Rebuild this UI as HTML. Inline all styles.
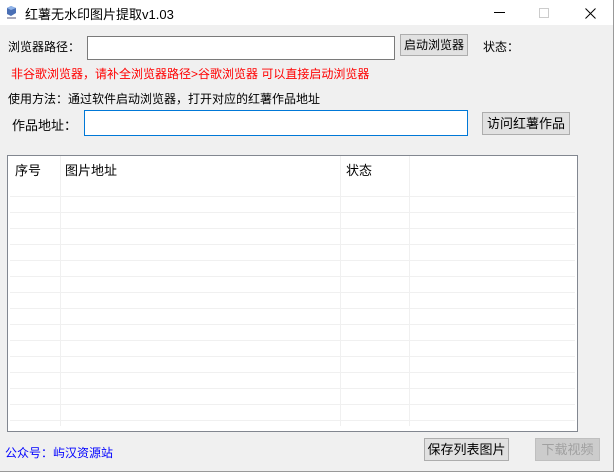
<!DOCTYPE html>
<html><head><meta charset="utf-8"><style>
*{margin:0;padding:0;box-sizing:border-box}
body{width:614px;height:472px;overflow:hidden;background:#f0f0f0;font-family:"Liberation Sans","Noto Sans CJK SC",sans-serif;font-size:12px;color:#000;position:relative}
.a{position:absolute;white-space:nowrap}
.tb{position:absolute;left:0;top:0;width:614px;height:25px;background:#fff}
.btn{position:absolute;background:#e1e1e1;border:1px solid #adadad;text-align:center;font-size:12px}
.inp{position:absolute;background:#fff;border:1px solid #7a7a7a}
.tbl{position:absolute;left:7px;top:155px;width:571px;height:277px;background:#fff;border:1px solid #828790;overflow:hidden}
.vl{position:absolute;top:0;width:1px;height:270px;background:#f0f0f0}
.hl{position:absolute;left:2px;right:2px;height:1px;background:#f0f0f0}
</style></head><body>
<div class="tb">
<svg class="a" style="left:6px;top:5px" width="11" height="15" viewBox="0 0 11 15"><path d="M1 3l4-2 5 2v5l-5 3-4-2z" fill="#4a6fb5"/><path d="M5 1l5 2-5 2-4-2z" fill="#8fb3e8"/><rect x="1" y="12" width="9" height="2" fill="#aab"/></svg>
<div class="a" style="left:25px;top:4px;font-size:13px">红薯无水印图片提取v1.03</div>
<div class="a" style="left:494px;top:12px;width:11px;height:1px;background:#000"></div>
<div class="a" style="left:539px;top:8px;width:10px;height:10px;border:1px solid #ccc"></div>
<svg class="a" style="left:585px;top:8px" width="11" height="11"><path d="M0.5 0.5L10.5 10.5M10.5 0.5L0.5 10.5" stroke="#000" stroke-width="1"/></svg>
</div>
<div class="a" style="right:0;top:0;width:1px;height:472px;background:#999"></div>
<div class="a" style="left:0;bottom:0;width:614px;height:1px;background:#999"></div>
<div class="a" style="left:8px;top:38px">浏览器路径：</div>
<div class="inp" style="left:87px;top:36px;width:308px;height:24px"></div>
<div class="btn" style="left:400px;top:34px;width:68px;height:22px;line-height:20px">启动浏览器</div>
<div class="a" style="left:483px;top:38px">状态：</div>
<div class="a" style="left:11px;top:65px;color:#f00">非谷歌浏览器，请补全浏览器路径&gt;谷歌浏览器 可以直接启动浏览器</div>
<div class="a" style="left:8px;top:90px">使用方法：通过软件启动浏览器，打开对应的红薯作品地址</div>
<div class="a" style="left:12px;top:115px;font-size:13px">作品地址：</div>
<div class="inp" style="left:84px;top:110px;width:384px;height:26px;border-color:#0078d7"></div>
<div class="btn" style="left:482px;top:112px;width:88px;height:23px;line-height:21px;font-size:13px">访问红薯作品</div>
<div class="tbl">
<div class="a" style="left:7px;top:4px;font-size:13px">序号</div>
<div class="a" style="left:57px;top:4px;font-size:13px">图片地址</div>
<div class="a" style="left:338px;top:4px;font-size:13px">状态</div>
<div class="vl" style="left:52px"></div><div class="vl" style="left:332px"></div><div class="vl" style="left:401px"></div>
<div class="hl" style="top:40px"></div><div class="hl" style="top:56px"></div><div class="hl" style="top:72px"></div><div class="hl" style="top:88px"></div><div class="hl" style="top:104px"></div><div class="hl" style="top:120px"></div><div class="hl" style="top:136px"></div><div class="hl" style="top:152px"></div><div class="hl" style="top:168px"></div><div class="hl" style="top:184px"></div><div class="hl" style="top:200px"></div><div class="hl" style="top:216px"></div><div class="hl" style="top:232px"></div><div class="hl" style="top:248px"></div><div class="hl" style="top:264px"></div>
</div>
<div class="a" style="left:5px;top:444px;color:#00f">公众号：屿汉资源站</div>
<div class="btn" style="left:424px;top:438px;width:85px;height:23px;line-height:21px;font-size:13px">保存列表图片</div>
<div class="btn" style="left:535px;top:438px;width:65px;height:23px;line-height:21px;font-size:13px;background:#ccc;border-color:#bfbfbf;color:#a0a0a0">下载视频</div>
</body></html>
